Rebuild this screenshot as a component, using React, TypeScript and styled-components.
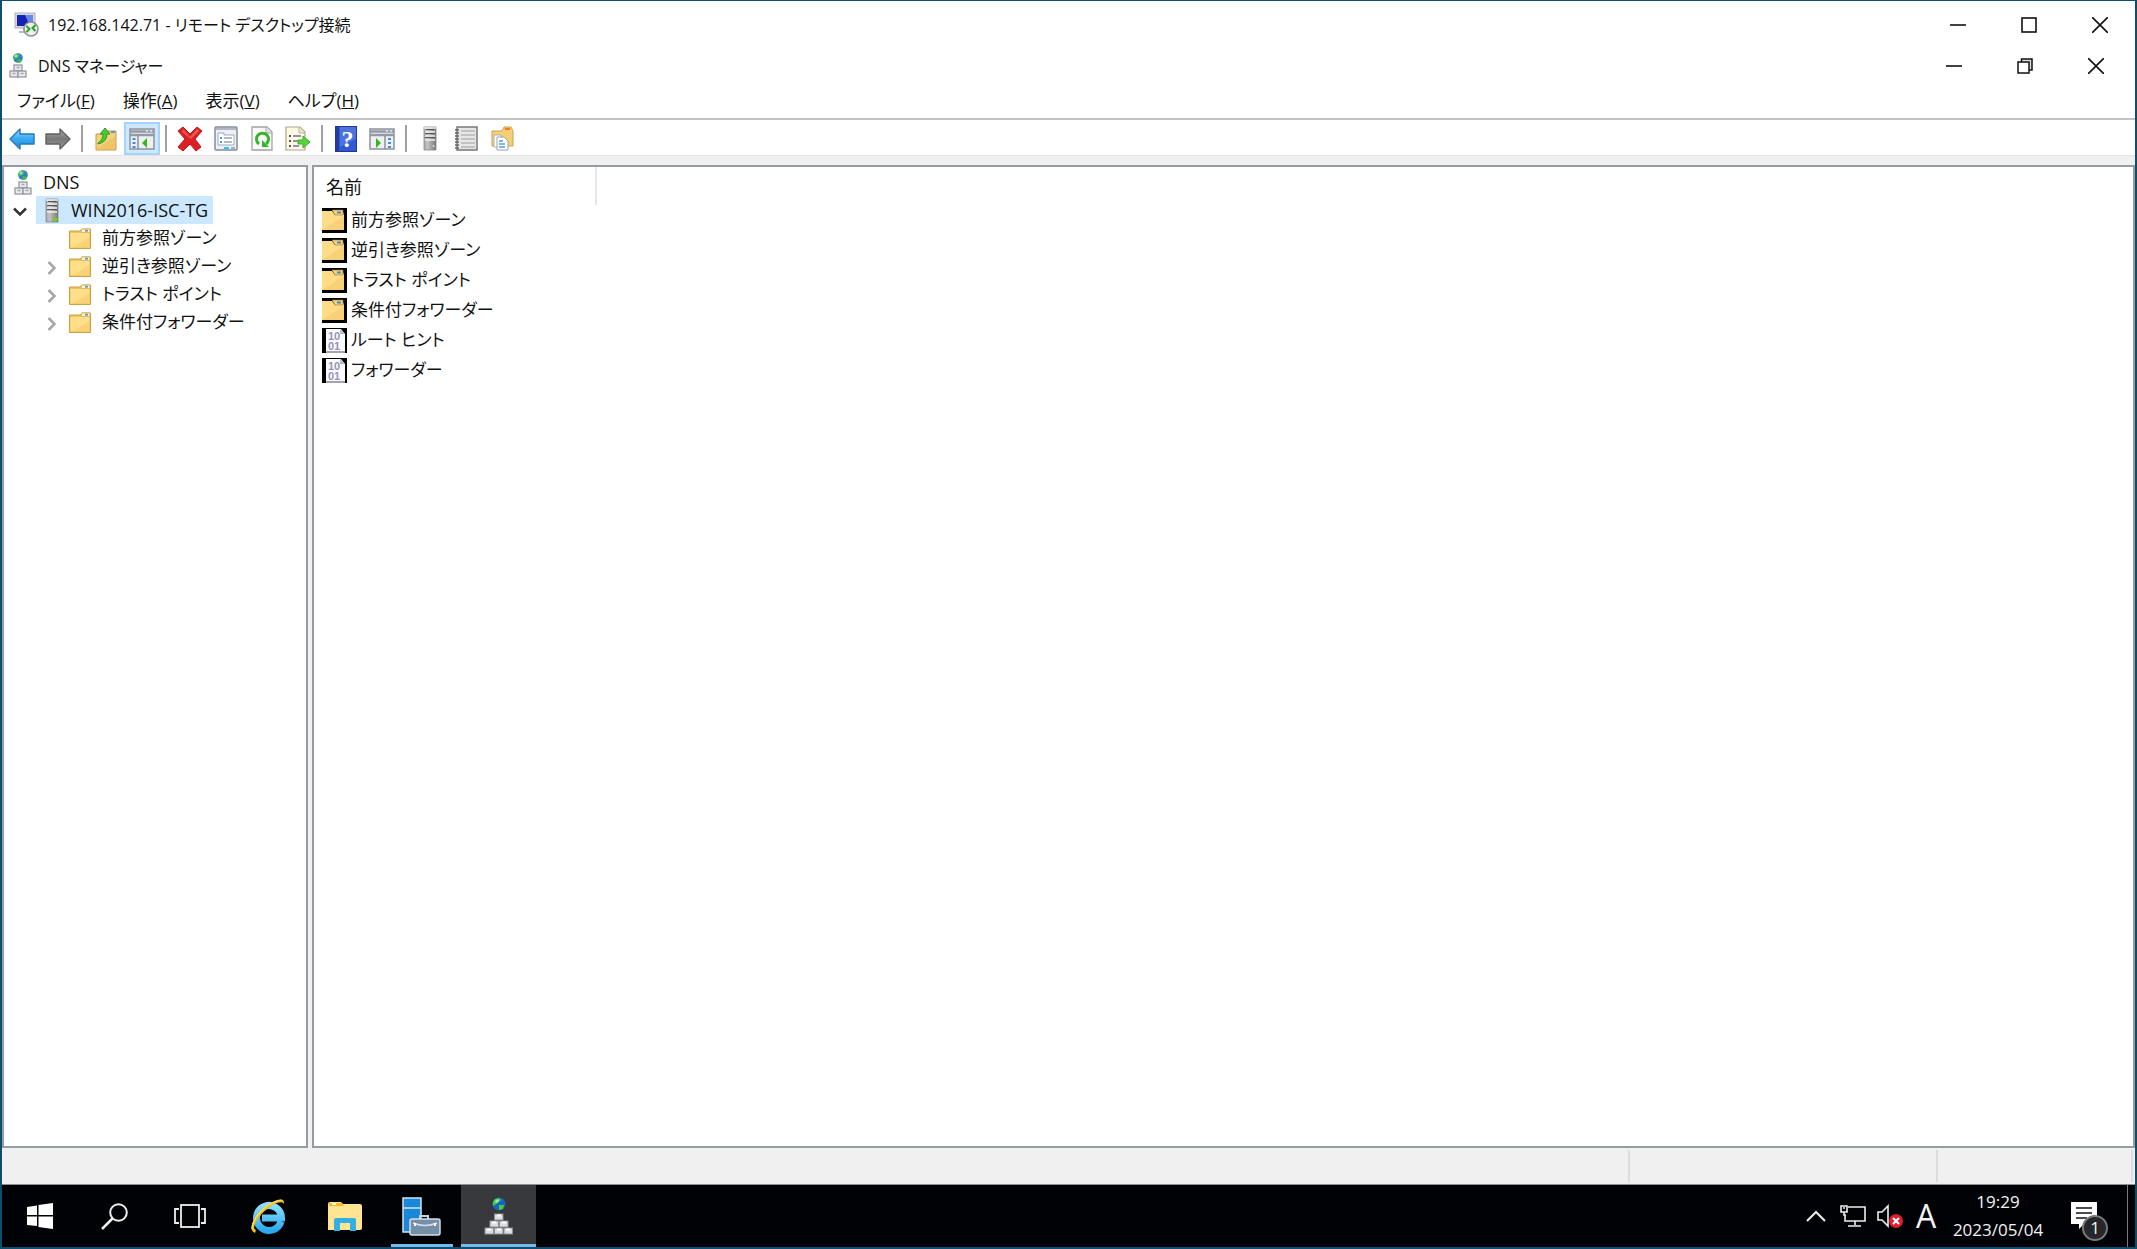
import React from "react";
import styled, { createGlobalStyle, css } from "styled-components";

const GlobalStyle = createGlobalStyle`
  *, *::before, *::after { box-sizing: border-box; }
  body { margin: 0; background: #fff; }
  button { font: inherit; color: inherit; border: 0; padding: 0; margin: 0; background: none; }
  svg { display: block; flex: none; }
`;

const Frame = styled.div`
  display: flex;
  flex-direction: column;
  min-height: 100vh;
  border: 2px solid #0d4e6f;
  border-top-width: 1px;
  background: #fff;
  color: #111;
  font-family: "Open Sans", "Noto Sans CJK JP", sans-serif;
  font-size: 17px;
  line-height: 28px;
  font-feature-settings: "palt";
`;

const TitleBar = styled.header<{ $inner?: boolean }>`
  display: flex;
  align-items: center;
  height: ${(p) => (p.$inner ? 35 : 47)}px;
  padding-left: ${(p) => (p.$inner ? 7 : 12)}px;
  padding-right: ${(p) => (p.$inner ? 4 : 0)}px;
  gap: ${(p) => (p.$inner ? 11 : 9)}px;
`;

const Title = styled.h1`
  flex: 1;
  margin: 0;
  font-size: 16px;
  font-weight: 400;
`;

const Controls = styled.div`
  display: flex;
  height: 100%;
`;

const WindowButton = styled.button`
  display: flex;
  align-items: center;
  justify-content: center;
  width: 71px;
  height: 100%;
`;

const MenuBar = styled.nav`
  display: flex;
  height: 37px;
  padding-left: 1px;
  border-bottom: 2px solid #c3c3c5;
`;

const MenuButton = styled.button`
  padding: 0 14px;
`;

const Toolbar = styled.div`
  display: flex;
  height: 35px;
  padding: 2px 2px 0;
`;

const ToolButton = styled.button<{ $on?: boolean }>`
  display: flex;
  align-items: center;
  justify-content: center;
  width: 36px;
  height: 33px;
  ${(p) =>
    p.$on &&
    css`
      background: #cde8ff;
      border: 2px solid #a5d3fb;
    `}
`;

const Separator = styled.span`
  width: 2px;
  margin: 3px 5px;
  background: #a0a0a0;
`;

const Workspace = styled.main`
  flex: 1;
  display: grid;
  grid-template-columns: 306px 1fr;
  gap: 4px;
  padding-top: 9px;
  border-top: 1px solid #e3e3e3;
  background: #f0f0f0;
`;

const Pane = styled.section`
  background: #fff;
  border: 2px solid #969ba6;
`;

const Tree = styled.ul`
  list-style: none;
  margin: 0;
  padding: 1px 0;
`;

const TreeRow = styled.li<{ $level: number }>`
  display: flex;
  height: 28px;
  padding-left: ${(p) => (p.$level === 2 ? 32 : 0)}px;
`;

const Expander = styled.button`
  display: flex;
  align-items: center;
  justify-content: center;
  width: 32px;
  padding-top: 4px;
`;

const ExpanderSpace = styled.span`
  width: 32px;
`;

const TreeLabel = styled.button<{ $selected?: boolean; $root?: boolean }>`
  display: flex;
  align-items: center;
  gap: ${(p) => (p.$selected ? 12 : 11)}px;
  padding: 0 5px 0 ${(p) => (p.$root ? 10 : p.$selected ? 9 : 1)}px;
  background: ${(p) => (p.$selected ? "#cce8ff" : "none")};
  font-size: ${(p) => (p.$selected || p.$root ? 18 : 17)}px;
`;

const List = styled.table`
  border-collapse: collapse;
  width: 100%;
`;

const Column = styled.th`
  width: 282px;
  height: 38px;
  padding: 2px 0 0 12px;
  font-size: 18px;
  font-weight: 400;
  text-align: left;
  border-right: 2px solid #e5e5e5;
`;

const Cell = styled.td`
  height: 30px;
  padding: 0 0 0 8px;
`;

const Entry = styled.div`
  display: flex;
  align-items: center;
  gap: 4px;
`;

const StatusBar = styled.footer`
  display: flex;
  height: 37px;
  padding: 2px 2px 2px 0;
  background: #f0f0f0;
  border-bottom: 1px solid #8f8f8f;
`;

const StatusField = styled.span<{ $width?: number }>`
  ${(p) => (p.$width ? `width: ${p.$width}px;` : "flex: 1;")}
  border-right: 2px solid #dcdcdc;
`;

const Taskbar = styled.div`
  display: flex;
  height: 62px;
  background: #010205;
  color: #f2f2f2;
`;

const Pinned = styled.div`
  display: flex;
  gap: 2px;
  margin-left: 3px;
`;

const TaskButton = styled.button<{ $active?: boolean; $running?: boolean }>`
  display: flex;
  align-items: center;
  justify-content: center;
  width: 75px;
  height: 62px;
  background: ${(p) => (p.$active ? "#38393c" : "none")};
  ${(p) =>
    p.$active &&
    css`
      background: linear-gradient(#76b9ed, #76b9ed) center bottom / 75px 3px no-repeat #38393c;
    `}
  ${(p) =>
    p.$running &&
    css`
      background: linear-gradient(#76b9ed, #76b9ed) center bottom / 62px 3px no-repeat;
    `}
`;

const Tray = styled.div`
  display: flex;
  align-items: center;
  margin-left: auto;
`;

const TrayButton = styled.button<{ $width: number }>`
  display: flex;
  align-items: center;
  justify-content: center;
  width: ${(p) => p.$width}px;
  height: 62px;
`;

const InputMode = styled(TrayButton)`
  font-family: "Open Sans", sans-serif;
  font-weight: 400;
  font-size: 32px;
`;

const Clock = styled.button`
  width: 108px;
  line-height: 28px;
  text-align: center;
`;

const ClockLine = styled.span`
  display: block;
`;

const Notifications = styled.button`
  position: relative;
  width: 75px;
  height: 62px;
  padding-left: 19px;
`;

const Badge = styled.span`
  position: absolute;
  left: 30px;
  top: 30px;
  width: 26px;
  height: 26px;
  border: 2px solid #77797b;
  border-radius: 50%;
  background: #25272a;
  line-height: 22px;
`;

const ShowDesktop = styled.button`
  width: 8px;
  height: 62px;
  border-left: 1px solid #77797b;
`;

const MinimizeIcon = () => (
  <svg width="16" height="16" viewBox="0 0 16 16"><path d="M0 8h16" stroke="#111" strokeWidth="1.6" /></svg>
);
const MaximizeIcon = () => (
  <svg width="16" height="16" viewBox="0 0 16 16"><rect x="1" y="1" width="14" height="14" fill="none" stroke="#111" strokeWidth="1.6" /></svg>
);
const RestoreIcon = () => (
  <svg width="16" height="16" viewBox="0 0 16 16">
    <path d="M4.5 4V1H15v11h-3" fill="#ddd" stroke="#111" strokeWidth="1.5" />
    <rect x="1" y="4" width="11" height="11" fill="#fff" stroke="#111" strokeWidth="1.5" />
  </svg>
);
const CloseIcon = () => (
  <svg width="16" height="16" viewBox="0 0 16 16"><path d="M0 0l16 16M16 0L0 16" stroke="#111" strokeWidth="1.6" /></svg>
);

const RemoteIcon = () => (
  <svg width="25" height="25" viewBox="0 0 25 25">
    <rect x="1" y="1" width="20" height="15" fill="#d5d8df" stroke="#aeb2ba" />
    <rect x="3" y="3" width="16" height="11" fill="#1422b8" />
    <path d="M11 3h8v11h-3z" fill="#6887e8" />
    <path d="M9 16h4v3H9zM5 19h9v2H5z" fill="#b6bac2" />
    <circle cx="17" cy="17" r="7" fill="#eef0ee" stroke="#8d918f" strokeWidth="1.5" />
    <path d="M12.500 14l3 3-3 3M21.500 13l-3 3 3 3" fill="none" stroke="#27a12a" strokeWidth="2" />
  </svg>
);

const DnsIcon = () => (
  <svg width="18" height="25" viewBox="0 0 18 25">
    <circle cx="9" cy="5" r="4.8" fill="#2f7fd0" />
    <path d="M5 2q4-3 6 0l-2 3-4 1-1-2zM9 6l4 1-2 3-3-1z" fill="#3fbf3c" />
    <path d="M5 3l2-2 2 2-2 2z" fill="#bfe8ff" opacity=".7" />
    <g fill="#e9eaee" stroke="#8f929b" strokeWidth="1.2">
      <rect x="5" y="12" width="8" height="6" />
      <rect x="1" y="18" width="8" height="6" />
      <rect x="9" y="18" width="8" height="6" />
    </g>
    <path d="M7.500 14.500h3M3.500 20.500h3M11.500 20.500h3" stroke="#a3a6b5" strokeWidth="1.5" />
  </svg>
);

const DnsTaskIcon = () => (
  <svg width="30" height="38" viewBox="0 0 30 38">
    <circle cx="15" cy="7" r="6.500" fill="#1b62c4" />
    <path d="M11 2q5-2 6 1l-3 3-5 3q-1-4 2-7zM15 8l5 0-1 4-4 1z" fill="#42cf3a" />
    <path d="M11 4l3-2 1 2-3 2z" fill="#b9ecff" opacity=".8" />
    <g fill="#dcdde0" stroke="#8e9096" strokeWidth="1">
      {[[10.5, 17], [6, 24], [15.5, 24], [1, 31], [10.5, 31], [20, 31]].map(([x, y]) => (
        <rect key={`${x}-${y}`} x={x} y={y} width="8.500" height="6" />
      ))}
    </g>
    <path d="M13 18.500h4M8 25.500h4M18 25.500h4M3 32.500h4M13 32.500h4M22 32.500h4" stroke="#fff" strokeWidth="2" />
  </svg>
);

const ServerIcon = ({ light = false }: { light?: boolean }) => (
  <svg width="14" height="25" viewBox="0 0 14 25">
    <defs>
      <linearGradient id="tower" x1="0" x2="1"><stop stopColor="#aaa" /><stop offset=".3" stopColor="#c3c3c3" /><stop offset="1" stopColor="#777" /></linearGradient>
    </defs>
    <path d="M1 1h12v23H1z" fill="url(#tower)" stroke="#858585" strokeWidth=".8" />
    <path d="M1 2h12M2 6h10M2 10h10M2 14h10" stroke="#efefef" strokeWidth="1.600" />
    <path d="M3 3.500h8M2 7.500h10M2 11.500h10" stroke="#555" />
    {light ? <circle cx="10.500" cy="21.500" r="2" fill="#68e000" /> : <circle cx="10.500" cy="20" r="1" fill="#ddd" />}
  </svg>
);

const FolderIcon = () => (
  <svg width="22" height="21" viewBox="0 0 22 21">
    <path d="M.500 3H11l2-2h8.500v19.500H.5z" fill="#edc363" stroke="#cf9f43" />
    <path d="M1.500 5H11l2-1h7.500v15.500h-19z" fill="#ffdf8a" />
    <path d="M12.500 1H21v3.500h-9z" fill="#fff3c5" stroke="#d5a84f" strokeWidth=".7" />
    <path d="M16 2.700h3" stroke="#4d9bdc" strokeWidth="1.800" />
    <path d="M2 20L21 9v11z" fill="#f2c566" opacity=".45" />
  </svg>
);

const FolderTileIcon = () => (
  <svg width="25" height="25" viewBox="0 0 25 25">
    <rect width="25" height="25" fill="#000" />
    <path d="M0 3h10l3 4h8l1-3v18H0z" fill="#ffdc86" />
    <path d="M10 2h11v5h-8z" fill="#f6d280" stroke="#9a7832" strokeWidth=".6" />
    <path d="M15 4.500h4" stroke="#438dc9" strokeWidth="2" />
    <path d="M0 22L22 8v14z" fill="#f0c266" opacity=".45" />
  </svg>
);

const DataTileIcon = () => (
  <svg width="25" height="25" viewBox="0 0 25 25">
    <rect width="25" height="25" fill="#000" />
    <path d="M4 1h15l4 5v17H4z" fill="#fbfbfd" />
    <path d="M18 1l5 5h-5z" fill="#b9b9c2" />
    <path d="M4 24h19" stroke="#a5a5a5" strokeWidth="2" />
    <g fill="#9692ba" fontFamily="Liberation Sans, sans-serif" fontSize="11" fontWeight="700">
      <text x="6" y="12">10</text>
      <text x="6" y="22">01</text>
    </g>
  </svg>
);

const ArrowIcon = ({ forward = false }: { forward?: boolean }) => {
  const id = forward ? "arrow-forward" : "arrow-back";
  return (
    <svg width="26" height="24" viewBox="0 0 26 24">
      <defs>
        <linearGradient id={id} x2="0" y2="1">
          <stop stopColor={forward ? "#aaa" : "#8fd8ff"} />
          <stop offset=".5" stopColor={forward ? "#777" : "#39a8f2"} />
          <stop offset="1" stopColor={forward ? "#999" : "#2090dd"} />
        </linearGradient>
      </defs>
      <path
        d={forward ? "M25 12L15 2v5H1v10h14v5z" : "M1 12L11 2v5h14v10H11v5z"}
        fill={`url(#${id})`}
        stroke={forward ? "#606060" : "#2279b8"}
        strokeWidth="1.400"
        strokeLinejoin="round"
      />
    </svg>
  );
};

const UpFolderIcon = () => (
  <svg width="24" height="25" viewBox="0 0 24 25">
    <path d="M2 8h10l2-3h8v19H2z" fill="#f4d17c" stroke="#c79b47" />
    <path d="M2 23L22 10v14H2z" fill="#e5b751" opacity=".5" />
    <path d="M17 6h4" stroke="#4d9bdc" strokeWidth="2" />
    <path d="M4 17q5-3 5-9H6l5-6 5 6h-3q0 8-9 10z" fill="#4cc832" stroke="#309c24" />
  </svg>
);

const PanelIcon = ({ play = false }: { play?: boolean }) => (
  <svg width="26" height="22" viewBox="0 0 26 22">
    <rect x="1" y="1" width="24" height="20" fill="#eef0f3" stroke="#8b929d" strokeWidth="1.500" />
    <path d="M1 3.500h24M1 7h24" stroke="#929aa8" strokeWidth="2.500" />
    <path d="M17 3h2M21 3h2" stroke="#e5e9ef" strokeWidth="1.500" />
    {play ? (
      <>
        <path d="M16 8v13" stroke="#8b929d" strokeWidth="1.500" />
        <path d="M7 10l5 5-5 5z" fill="#38b51f" />
        <path d="M20.500 10v10" stroke="#3f8fe0" strokeWidth="3" strokeDasharray="2 2" />
      </>
    ) : (
      <>
        <path d="M9 8v13" stroke="#8b929d" strokeWidth="1.500" />
        <path d="M18 10l-5 5 5 5z" fill="#38b51f" />
        <path d="M5 10v10" stroke="#3f8fe0" strokeWidth="3" strokeDasharray="2 2" />
      </>
    )}
  </svg>
);

const DeleteIcon = () => (
  <svg width="26" height="26" viewBox="0 0 26 26">
    <path d="M6 1l7 7 7-7 5 4-7 8 6 8-5 4-6-7-7 7-5-4 7-8-7-8z" fill="#dc2024" stroke="#b51c20" />
    <path d="M6 3l7 8 7-8 2 2-8 8-9-7z" fill="#f47770" opacity=".65" />
  </svg>
);

const PropertiesIcon = () => (
  <svg width="24" height="25" viewBox="0 0 24 25">
    <rect x="1" y="1" width="22" height="23" rx="1" fill="#edf0f5" stroke="#858c99" strokeWidth="1.500" />
    <path d="M2 3h20" stroke="#b0b6c2" strokeWidth="2" />
    <path d="M4 7h6v2h10v10H4z" fill="#fff" stroke="#a1a8bc" />
    <path d="M6 12h2M6 16h2" stroke="#4b9ce5" strokeWidth="2" />
    <path d="M10 12h8M10 16h8" stroke="#9ca3b4" strokeWidth="1.500" />
    <path d="M10 22h5" stroke="#25c7f3" strokeWidth="2" />
    <path d="M17 22h4" stroke="#aab0bb" strokeWidth="2" />
  </svg>
);

const RefreshIcon = () => (
  <svg width="22" height="25" viewBox="0 0 22 25">
    <path d="M1 1h15l5 5v18H1z" fill="#fafafa" stroke="#a3a3a3" strokeWidth="1.300" />
    <path d="M15 1v6h6" fill="#e2e2e2" stroke="#aaa" />
    <path d="M8 18a6 6 0 1 1 7 0" fill="none" stroke="#35b52c" strokeWidth="3" />
    <path d="M11 14v7h7z" fill="#35b52c" />
  </svg>
);

const ExportIcon = () => (
  <svg width="26" height="25" viewBox="0 0 26 25">
    <path d="M1 1h14l5 5v18H1z" fill="#fffbe2" stroke="#aaa48d" strokeWidth="1.200" />
    <path d="M14 1v6h6" fill="#ece7c9" stroke="#b7b19a" />
    <path d="M4 10h2M4 15h2M4 20h2" stroke="#555" strokeWidth="2" />
    <path d="M8 10h8M8 15h5M8 20h6" stroke="#716ba3" strokeWidth="1.500" />
    <path d="M13 14h5v-4l7 6-7 6v-4h-5z" fill="#58d23f" stroke="#3cae2b" />
  </svg>
);

const HelpIcon = () => (
  <svg width="22" height="26" viewBox="0 0 22 26">
    <rect x=".5" y=".5" width="21" height="25" fill="#3059d2" stroke="#203a91" />
    <path d="M1 1h3v24H1z" fill="#213e9e" />
    <path d="M5 1h16v12L5 21z" fill="#658ced" opacity=".5" />
    <text x="12.500" y="21" fill="#fff" textAnchor="middle" fontFamily="Liberation Serif, serif" fontSize="24" fontWeight="700">?</text>
  </svg>
);

const NotebookIcon = () => (
  <svg width="24" height="25" viewBox="0 0 24 25">
    <rect x="3" y="1" width="20" height="23" fill="#e6e6e6" stroke="#777" strokeWidth="1.500" />
    <path d="M7 5h14M7 9h14M7 13h14M7 17h14M7 21h14" stroke="#b5b5b5" strokeWidth="1.300" />
    <path d="M1 4h4M1 7h4M1 10h4M1 13h4M1 16h4M1 19h4M1 22h4" stroke="#666" strokeWidth="1.300" />
  </svg>
);

const FolderPagesIcon = () => (
  <svg width="24" height="25" viewBox="0 0 24 25">
    <path d="M2 5h10l2-4h7l2 4v15H2z" fill="#f4cf76" stroke="#cfa14a" />
    <path d="M15 3h5" stroke="#f07d25" strokeWidth="2" />
    <path d="M4 9h7v12H4z" fill="#fff" stroke="#abb2bf" />
    <path d="M7 11h7l4 4v9H7z" fill="#fff" stroke="#98a4b7" />
    <path d="M9 15h4M9 18h6M9 21h6" stroke="#579be1" strokeWidth="1.700" />
  </svg>
);

const ChevronRight = () => (
  <svg width="10" height="14" viewBox="0 0 10 14"><path d="M1.500 1l6 6-6 6" fill="none" stroke="#a6a6a6" strokeWidth="2.500" /></svg>
);
const ChevronDown = () => (
  <svg width="14" height="10" viewBox="0 0 14 10"><path d="M1 1.500l6 6 6-6" fill="none" stroke="#333" strokeWidth="2.500" /></svg>
);

const WindowsIcon = () => (
  <svg width="26" height="26" viewBox="0 0 26 26">
    <path d="M0 4l10-1.500V12H0zM11.500 2L26 0v12H11.500zM0 13.500h10V23L0 22zM11.500 13.500H26V26l-14.500-2z" fill="#fff" />
  </svg>
);
const SearchIcon = () => (
  <svg width="27" height="27" viewBox="0 0 27 27" fill="none" stroke="#eee" strokeWidth="2">
    <circle cx="17.500" cy="9.500" r="8.300" /><path d="M11.500 15.500L1 26" strokeWidth="2.500" />
  </svg>
);
const TaskViewIcon = () => (
  <svg width="32" height="24" viewBox="0 0 32 24" fill="none" stroke="#eee" strokeWidth="1.800">
    <rect x="7" y="1" width="18" height="22" /><path d="M5 5H1v14h4M27 5h4v14h-4" />
  </svg>
);
const ExplorerWebIcon = () => (
  <svg width="38" height="38" viewBox="0 0 38 38">
    <defs><linearGradient id="web" x2="0" y2="1"><stop stopColor="#8adfff" /><stop offset="1" stopColor="#2ba9ec" /></linearGradient></defs>
    <path d="M32 24.500A12.500 12.500 0 1 1 32.500 21H13" fill="none" stroke="url(#web)" strokeWidth="7" />
    <path d="M6 36C-3 33 7 15 20 7c8-5 16-7 15 0-1-3-7-2-13 2C11 16 1 31 7 33z" fill="#f5bd20" />
    <path d="M3 32C3 21 17 5 33 3" fill="none" stroke="#ffe06a" strokeWidth="1.200" />
  </svg>
);
const FileExplorerIcon = () => (
  <svg width="34" height="29" viewBox="0 0 34 29">
    <path d="M0 2q0-2 2-2h11l2 2h17q2 0 2 2v22q0 2-2 2H0z" fill="#ffe491" />
    <path d="M1 1h13l2 3H1z" fill="#f6b928" /><path d="M4 2h4" stroke="#fff7d0" strokeWidth="2" />
    <path d="M6 18q0-2 2-2h18q2 0 2 2v11h-6v-8H12v8H6z" fill="#34afe5" />
  </svg>
);
const ServerManagerIcon = () => (
  <svg width="39" height="39" viewBox="0 0 39 39">
    <rect x="1" y="1" width="18" height="34" fill="#1b87d9" stroke="#cde6f7" strokeWidth="1.500" />
    <path d="M1 11h18" stroke="#cde6f7" strokeWidth="1.500" />
    <path d="M18 22v-3h8v3" fill="none" stroke="#c8d2dc" strokeWidth="2" />
    <rect x="8" y="22" width="30" height="16" rx="2" fill="#768fa9" stroke="#d5dee7" strokeWidth="1.500" />
    <path d="M11 26q12 5 24 0" fill="none" stroke="#d5dee7" strokeWidth="1.500" />
    <path d="M13 26v3M33 26v3" stroke="#fff" strokeWidth="2" />
  </svg>
);

const TrayChevron = () => (
  <svg width="20" height="12" viewBox="0 0 20 12"><path d="M1 11l9-9 9 9" fill="none" stroke="#eee" strokeWidth="2" /></svg>
);
const NetworkIcon = () => (
  <svg width="26" height="22" viewBox="0 0 26 22" fill="none" stroke="#eee" strokeWidth="1.600">
    <path d="M8 2h17v14H5v-6M15 16v4M8 21h13M1 1h6v6H1zM4 7v3h2" /><path d="M3 3h2" />
  </svg>
);
const MutedIcon = () => (
  <svg width="27" height="25" viewBox="0 0 27 25">
    <path d="M1 8h4l6-6v20l-6-6H1z" fill="none" stroke="#eee" strokeWidth="1.600" />
    <circle cx="19" cy="17" r="7" fill="#dc1f2e" /><path d="M16 14l6 6M22 14l-6 6" stroke="#fff" strokeWidth="2" />
  </svg>
);
const MessageIcon = () => (
  <svg width="26" height="28" viewBox="0 0 26 28">
    <path d="M0 0h26v22H13l-5 5v-5H0z" fill="#fff" />
    <path d="M5 6h16M5 11h16M5 16h11" stroke="#111" strokeWidth="1.600" />
  </svg>
);

const menus = [
  ["ファイル", "F"],
  ["操作", "A"],
  ["表示", "V"],
  ["ヘルプ", "H"],
];

const zones = [
  { name: "前方参照ゾーン", expandable: false },
  { name: "逆引き参照ゾーン", expandable: true },
  { name: "トラスト ポイント", expandable: true },
  { name: "条件付フォワーダー", expandable: true },
];

const records = ["ルート ヒント", "フォワーダー"];

function WindowControls({ restored = false }: { restored?: boolean }) {
  return (
    <Controls>
      <WindowButton aria-label="最小化"><MinimizeIcon /></WindowButton>
      <WindowButton aria-label={restored ? "元に戻す" : "最大化"}>{restored ? <RestoreIcon /> : <MaximizeIcon />}</WindowButton>
      <WindowButton aria-label="閉じる"><CloseIcon /></WindowButton>
    </Controls>
  );
}

export default function App() {
  return (
    <Frame>
      <GlobalStyle />
      <TitleBar>
        <RemoteIcon />
        <Title>192.168.142.71 - リモート デスクトップ接続</Title>
        <WindowControls />
      </TitleBar>
      <TitleBar $inner>
        <DnsIcon />
        <Title as="h2">DNS マネージャー</Title>
        <WindowControls restored />
      </TitleBar>
      <MenuBar>
        {menus.map(([label, key]) => (
          <MenuButton key={key}>{label}(<u>{key}</u>)</MenuButton>
        ))}
      </MenuBar>
      <Toolbar role="toolbar">
        <ToolButton aria-label="戻る"><ArrowIcon /></ToolButton>
        <ToolButton aria-label="進む"><ArrowIcon forward /></ToolButton>
        <Separator />
        <ToolButton aria-label="上へ"><UpFolderIcon /></ToolButton>
        <ToolButton aria-label="ツリーの表示" aria-pressed="true" $on><PanelIcon /></ToolButton>
        <Separator />
        <ToolButton aria-label="削除"><DeleteIcon /></ToolButton>
        <ToolButton aria-label="プロパティ"><PropertiesIcon /></ToolButton>
        <ToolButton aria-label="最新の情報に更新"><RefreshIcon /></ToolButton>
        <ToolButton aria-label="一覧のエクスポート"><ExportIcon /></ToolButton>
        <Separator />
        <ToolButton aria-label="ヘルプ"><HelpIcon /></ToolButton>
        <ToolButton aria-label="操作ウィンドウ"><PanelIcon play /></ToolButton>
        <Separator />
        <ToolButton aria-label="サーバー"><ServerIcon /></ToolButton>
        <ToolButton aria-label="レコード"><NotebookIcon /></ToolButton>
        <ToolButton aria-label="ゾーン"><FolderPagesIcon /></ToolButton>
      </Toolbar>
      <Workspace>
        <Pane>
          <Tree>
            <TreeRow $level={0}>
              <TreeLabel $root><DnsIcon />DNS</TreeLabel>
            </TreeRow>
            <TreeRow $level={1}>
              <Expander aria-label="折りたたむ"><ChevronDown /></Expander>
              <TreeLabel $selected><ServerIcon light />WIN2016-ISC-TG</TreeLabel>
            </TreeRow>
            {zones.map((zone) => (
              <TreeRow key={zone.name} $level={2}>
                {zone.expandable ? <Expander aria-label="展開"><ChevronRight /></Expander> : <ExpanderSpace />}
                <TreeLabel><FolderIcon />{zone.name}</TreeLabel>
              </TreeRow>
            ))}
          </Tree>
        </Pane>
        <Pane>
          <List>
            <thead>
              <tr><Column scope="col">名前</Column><td /></tr>
            </thead>
            <tbody>
              {zones.map((zone) => (
                <tr key={zone.name}><Cell colSpan={2}><Entry><FolderTileIcon />{zone.name}</Entry></Cell></tr>
              ))}
              {records.map((name) => (
                <tr key={name}><Cell colSpan={2}><Entry><DataTileIcon />{name}</Entry></Cell></tr>
              ))}
            </tbody>
          </List>
        </Pane>
      </Workspace>
      <StatusBar>
        <StatusField />
        <StatusField $width={308} />
        <StatusField $width={195} />
      </StatusBar>
      <Taskbar>
        <TaskButton aria-label="スタート"><WindowsIcon /></TaskButton>
        <TaskButton aria-label="検索"><SearchIcon /></TaskButton>
        <TaskButton aria-label="タスク ビュー"><TaskViewIcon /></TaskButton>
        <Pinned>
          <TaskButton aria-label="Internet Explorer"><ExplorerWebIcon /></TaskButton>
          <TaskButton aria-label="エクスプローラー"><FileExplorerIcon /></TaskButton>
          <TaskButton aria-label="サーバー マネージャー" $running><ServerManagerIcon /></TaskButton>
          <TaskButton aria-label="DNS" $active><DnsTaskIcon /></TaskButton>
        </Pinned>
        <Tray>
          <TrayButton $width={36} aria-label="隠れているインジケーター"><TrayChevron /></TrayButton>
          <TrayButton $width={38} aria-label="ネットワーク"><NetworkIcon /></TrayButton>
          <TrayButton $width={36} aria-label="音量"><MutedIcon /></TrayButton>
          <InputMode $width={36}>A</InputMode>
          <Clock>
            <ClockLine>19:29</ClockLine>
            <ClockLine>2023/05/04</ClockLine>
          </Clock>
          <Notifications aria-label="通知"><MessageIcon /><Badge>1</Badge></Notifications>
          <ShowDesktop aria-label="デスクトップの表示" />
        </Tray>
      </Taskbar>
    </Frame>
  );
}
